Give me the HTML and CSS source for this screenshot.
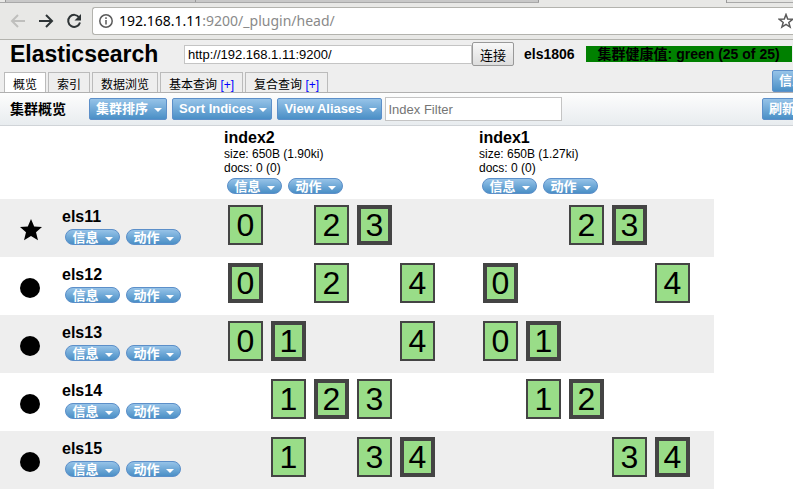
FILE: index.html
```
<!DOCTYPE html>
<html lang="zh-CN">
<head>
<meta charset="utf-8">
<title>Elasticsearch</title>
<link rel="stylesheet" href="styles.css">
</head>
<body>
<div class="strip"><span class="strip-a"></span><span class="strip-b"></span><span class="strip-c"></span><span class="strip-gap"></span><span class="strip-d"></span></div>
<div class="browser">
  <button class="nav off" aria-label="Back"><svg width="16" height="16" viewBox="0 0 16 16"><path d="M15 8H2M8 2L2 8l6 6"/></svg></button>
  <button class="nav" aria-label="Forward"><svg width="16" height="16" viewBox="0 0 16 16"><path d="M1 8h13M8 2l6 6-6 6"/></svg></button>
  <button class="nav" aria-label="Reload"><svg width="16" height="16" viewBox="0 0 16 16"><path d="M13.2 4.5A6 6 0 1 0 14 9.500"/><path class="solid" d="M15 1v6.500H8.500z"/></svg></button>
  <div class="address">
    <svg class="info" width="14" height="14" viewBox="0 0 14 14"><circle cx="7" cy="7" r="6.200"/><path d="M7 6v4.500M7 3.300v1.700"/></svg>
    <span class="url"><b>192.168.1.11</b>:9200/_plugin/head/</span>
    <svg class="fav" width="16" height="16" viewBox="0 0 16 16"><path d="M8 1.500l1.700 4.600 4.900.2-3.800 3.100 1.300 4.700L8 11.400l-4.100 2.700 1.300-4.700L1.400 6.300l4.900-.2z"/></svg>
  </div>
</div>
<header class="header">
  <div class="top">
    <h1>Elasticsearch</h1>
    <input class="host" type="text" aria-label="Host" value="http://192.168.1.11:9200/">
    <button class="connect">连接</button>
    <span class="cluster">els1806</span>
    <span class="health">集群健康值: green (25 of 25)</span>
  </div>
  <nav class="tabs">
    <a class="tab active" href="#">概览</a>
    <a class="tab" href="#">索引</a>
    <a class="tab" href="#">数据浏览</a>
    <a class="tab" href="#">基本查询 <em>[+]</em></a>
    <a class="tab" href="#">复合查询 <em>[+]</em></a>
    <button class="btn end">信息</button>
  </nav>
</header>
<div class="toolbar">
  <h2>集群概览</h2>
  <button class="btn">集群排序</button>
  <button class="btn">Sort Indices</button>
  <button class="btn">View Aliases</button>
  <input class="filter" type="text" aria-label="Index Filter" placeholder="Index Filter">
  <button class="btn end refresh">刷新</button>
</div>
<table class="overview">
  <thead>
    <tr>
      <td class="mark"></td><td class="node"></td>
      <th class="index"><h3>index2</h3><p>size: 650B (1.90ki)</p><p>docs: 0 (0)</p><div class="pills"><button class="pill">信息</button><button class="pill">动作</button></div></th>
      <th class="index last"><h3>index1</h3><p>size: 650B (1.27ki)</p><p>docs: 0 (0)</p><div class="pills"><button class="pill">信息</button><button class="pill">动作</button></div></th>
    </tr>
  </thead>
  <tbody>
    <tr>
      <td class="mark"><svg width="22" height="22" viewBox="0 0 22 22"><path d="M11 0l3.200 7.500 7.800.6-6 5.200 2 7.900-7-4.300-7 4.300 2-7.900-6-5.200 7.800-.6z"/></svg></td>
      <th class="node"><h3>els11</h3><div class="pills"><button class="pill">信息</button><button class="pill">动作</button></div></th>
      <td><div class="shards"><span class="s0">0</span><span class="s2">2</span><span class="s3 primary">3</span></div></td>
      <td><div class="shards"><span class="s2">2</span><span class="s3 primary">3</span></div></td>
    </tr>
    <tr>
      <td class="mark"><i class="dot"></i></td>
      <th class="node"><h3>els12</h3><div class="pills"><button class="pill">信息</button><button class="pill">动作</button></div></th>
      <td><div class="shards"><span class="s0 primary">0</span><span class="s2">2</span><span class="s4">4</span></div></td>
      <td><div class="shards"><span class="s0 primary">0</span><span class="s4">4</span></div></td>
    </tr>
    <tr>
      <td class="mark"><i class="dot"></i></td>
      <th class="node"><h3>els13</h3><div class="pills"><button class="pill">信息</button><button class="pill">动作</button></div></th>
      <td><div class="shards"><span class="s0">0</span><span class="s1 primary">1</span><span class="s4">4</span></div></td>
      <td><div class="shards"><span class="s0">0</span><span class="s1 primary">1</span></div></td>
    </tr>
    <tr>
      <td class="mark"><i class="dot"></i></td>
      <th class="node"><h3>els14</h3><div class="pills"><button class="pill">信息</button><button class="pill">动作</button></div></th>
      <td><div class="shards"><span class="s1">1</span><span class="s2 primary">2</span><span class="s3">3</span></div></td>
      <td><div class="shards"><span class="s1">1</span><span class="s2 primary">2</span></div></td>
    </tr>
    <tr>
      <td class="mark"><i class="dot"></i></td>
      <th class="node"><h3>els15</h3><div class="pills"><button class="pill">信息</button><button class="pill">动作</button></div></th>
      <td><div class="shards"><span class="s1">1</span><span class="s3">3</span><span class="s4 primary">4</span></div></td>
      <td><div class="shards"><span class="s3">3</span><span class="s4 primary">4</span></div></td>
    </tr>
  </tbody>
</table>
</body>
</html>
```
FILE: styles.css
```
* { box-sizing: border-box; }
body {
  margin: 0;
  overflow: hidden;
  background: #fff;
  color: #000;
  font: 12px/14px "Liberation Sans", "Noto Sans CJK SC", sans-serif;
}
h1, h2, h3, p { margin: 0; }
button, input { font-family: inherit; margin: 0; }
button { white-space: nowrap; }

/* Browser frame */
.strip { display: flex; height: 3px; background: #c8c8c8; border-bottom: 1px solid #a9a9a9; }
.strip span { border-right: 1px solid #999; }
.strip .strip-a { width: 6px; background: #e8e8e6; }
.strip .strip-b { width: 190px; }
.strip .strip-c { width: 343px; }
.strip .strip-gap { width: 188px; height: 3px; background: #e8e8e6; }
.strip .strip-d { flex: 1; background: #e4e4e2; border: 0; }
.browser {
  display: flex;
  align-items: center;
  height: 37px;
  padding-left: 10px;
  gap: 12px;
  background: #e8e8e6;
  border-bottom: 1px solid #b3b3ae;
}
.nav { display: block; width: 16px; height: 16px; padding: 0; border: 0; background: none; }
.nav svg { display: block; fill: none; stroke: #2e3436; stroke-width: 2; }
.nav .solid { fill: #2e3436; stroke: none; }
.off svg { stroke: #bfbfbd; }
.address {
  flex: 1;
  display: flex;
  align-items: center;
  gap: 6px;
  height: 28px;
  margin-left: -2px;
  padding-left: 6px;
  background: #fff;
  border: 1px solid #b3b3ae;
  border-right: 0;
  border-radius: 3px 0 0 3px;
  overflow: hidden;
}
.info { flex: none; fill: none; stroke: #5a5a5a; stroke-width: 1.5; }
.url { flex: 1; font: 14px/20px "Noto Sans", sans-serif; color: #8a8a8a; }
.url b { font-weight: 400; color: #000; }
.fav { flex: none; margin-right: -1px; fill: none; stroke: #5a5a5a; stroke-width: 1.5; }

/* Page header */
.header { height: 53px; background: #eee; border-bottom: 1px solid #b0b0b0; overflow: hidden; }
.top { display: flex; align-items: center; height: 28px; padding-left: 10px; white-space: nowrap; }
h1 { width: 174px; font-size: 23px; line-height: 28px; }
.host { width: 288px; height: 19px; padding: 0 3px; border: 1px solid #c4c4c4; font-size: 13px; color: #000; background: #fff; }
.connect {
  width: 42px;
  height: 24px;
  padding: 0;
  border: 1px solid #999;
  border-radius: 2px;
  background: linear-gradient(#f8f8f8, #ddd);
  color: #000;
  font-size: 13px;
}
.cluster { margin-left: 10px; font-size: 14px; font-weight: bold; }
.health { margin-left: 11px; padding: 0 12px; background: #008000; font-size: 14px; font-weight: bold; line-height: 16px; }
.tabs { display: flex; align-items: flex-end; gap: 2px; height: 24px; padding-left: 4px; }
.tab {
  height: 20px;
  padding: 0 8px;
  border: 1px solid #bbb;
  border-bottom: 0;
  color: #000;
  text-decoration: none;
  line-height: 24px;
  white-space: nowrap;
}
.tab.active { background: #fff; }
.tab em { color: #00f; font-style: normal; }
.btn {
  flex: none;
  height: 22px;
  padding: 0 4px 0 6px;
  border: 1px solid #5c8fc9;
  border-radius: 2px;
  background: linear-gradient(#96c3e8, #4a8fc6);
  color: #fff;
  font-size: 13px;
  font-weight: bold;
  line-height: 20px;
}
.btn::after, .pill::after {
  content: "";
  display: inline-block;
  margin-left: 6px;
  border: 4px solid transparent;
  border-top-color: #fff;
  border-bottom: 0;
  vertical-align: 1px;
}
.btn.end { margin-left: auto; margin-right: -31px; }
.btn.refresh { margin-right: -21px; }

/* Overview toolbar */
.toolbar {
  display: flex;
  align-items: center;
  gap: 5px;
  height: 33px;
  padding-left: 10px;
  background: linear-gradient(#fdfdfd, #e8ecef);
  border-bottom: 1px solid #d0d4d8;
  overflow: hidden;
}
h2 { width: 74px; font-size: 14px; line-height: 20px; }
.filter { width: 177px; height: 24px; margin-left: -2px; padding: 0 3px; border: 1px solid #c4c4c4; background: #fff; font-size: 13px; }
.filter::placeholder { color: #757575; opacity: 1; }

/* Nodes and shards */
.overview { border-collapse: collapse; font-size: 12px; }
.overview td, .overview th { padding: 0; vertical-align: top; text-align: left; font-weight: normal; }
.overview h3 { font-size: 16px; line-height: 18px; }
.overview tbody tr { height: 58px; }
.overview tbody tr:nth-child(odd) { background: #eee; }
.overview thead tr { height: 73px; }
.overview .index { width: 255px; padding: 3px 2px 0; }
.overview .index.last { width: 237px; }
.overview .mark { width: 62px; padding-left: 20px; }
.overview tbody .mark { padding-top: 20px; }
.overview .node { width: 160px; }
.overview tbody .node { padding-top: 9px; }
.overview p { line-height: 14px; }
.mark svg { display: block; }
.dot { display: block; width: 20px; height: 20px; margin-top: 1px; border-radius: 50%; background: #000; }
.pills { display: flex; gap: 6px; padding: 3px; }
.pill {
  width: 55px;
  height: 16px;
  padding: 2px 0 0;
  border: 1px solid #5c8fc9;
  border-radius: 8px;
  background: linear-gradient(#96c3e8, #4a8fc6);
  color: #fff;
  font-size: 13px;
  font-weight: bold;
  line-height: 12px;
}
.shards { display: grid; grid-template-columns: repeat(5, 35px); gap: 8px; padding: 6px; }
.shards span {
  grid-row: 1;
  height: 40px;
  border: 2px solid #444;
  background: #9d8;
  font-size: 32px;
  line-height: 36px;
  text-align: center;
}
.shards .primary { border-width: 4px; line-height: 32px; }
.s0 { grid-column: 1; }
.s1 { grid-column: 2; }
.s2 { grid-column: 3; }
.s3 { grid-column: 4; }
.s4 { grid-column: 5; }
```
